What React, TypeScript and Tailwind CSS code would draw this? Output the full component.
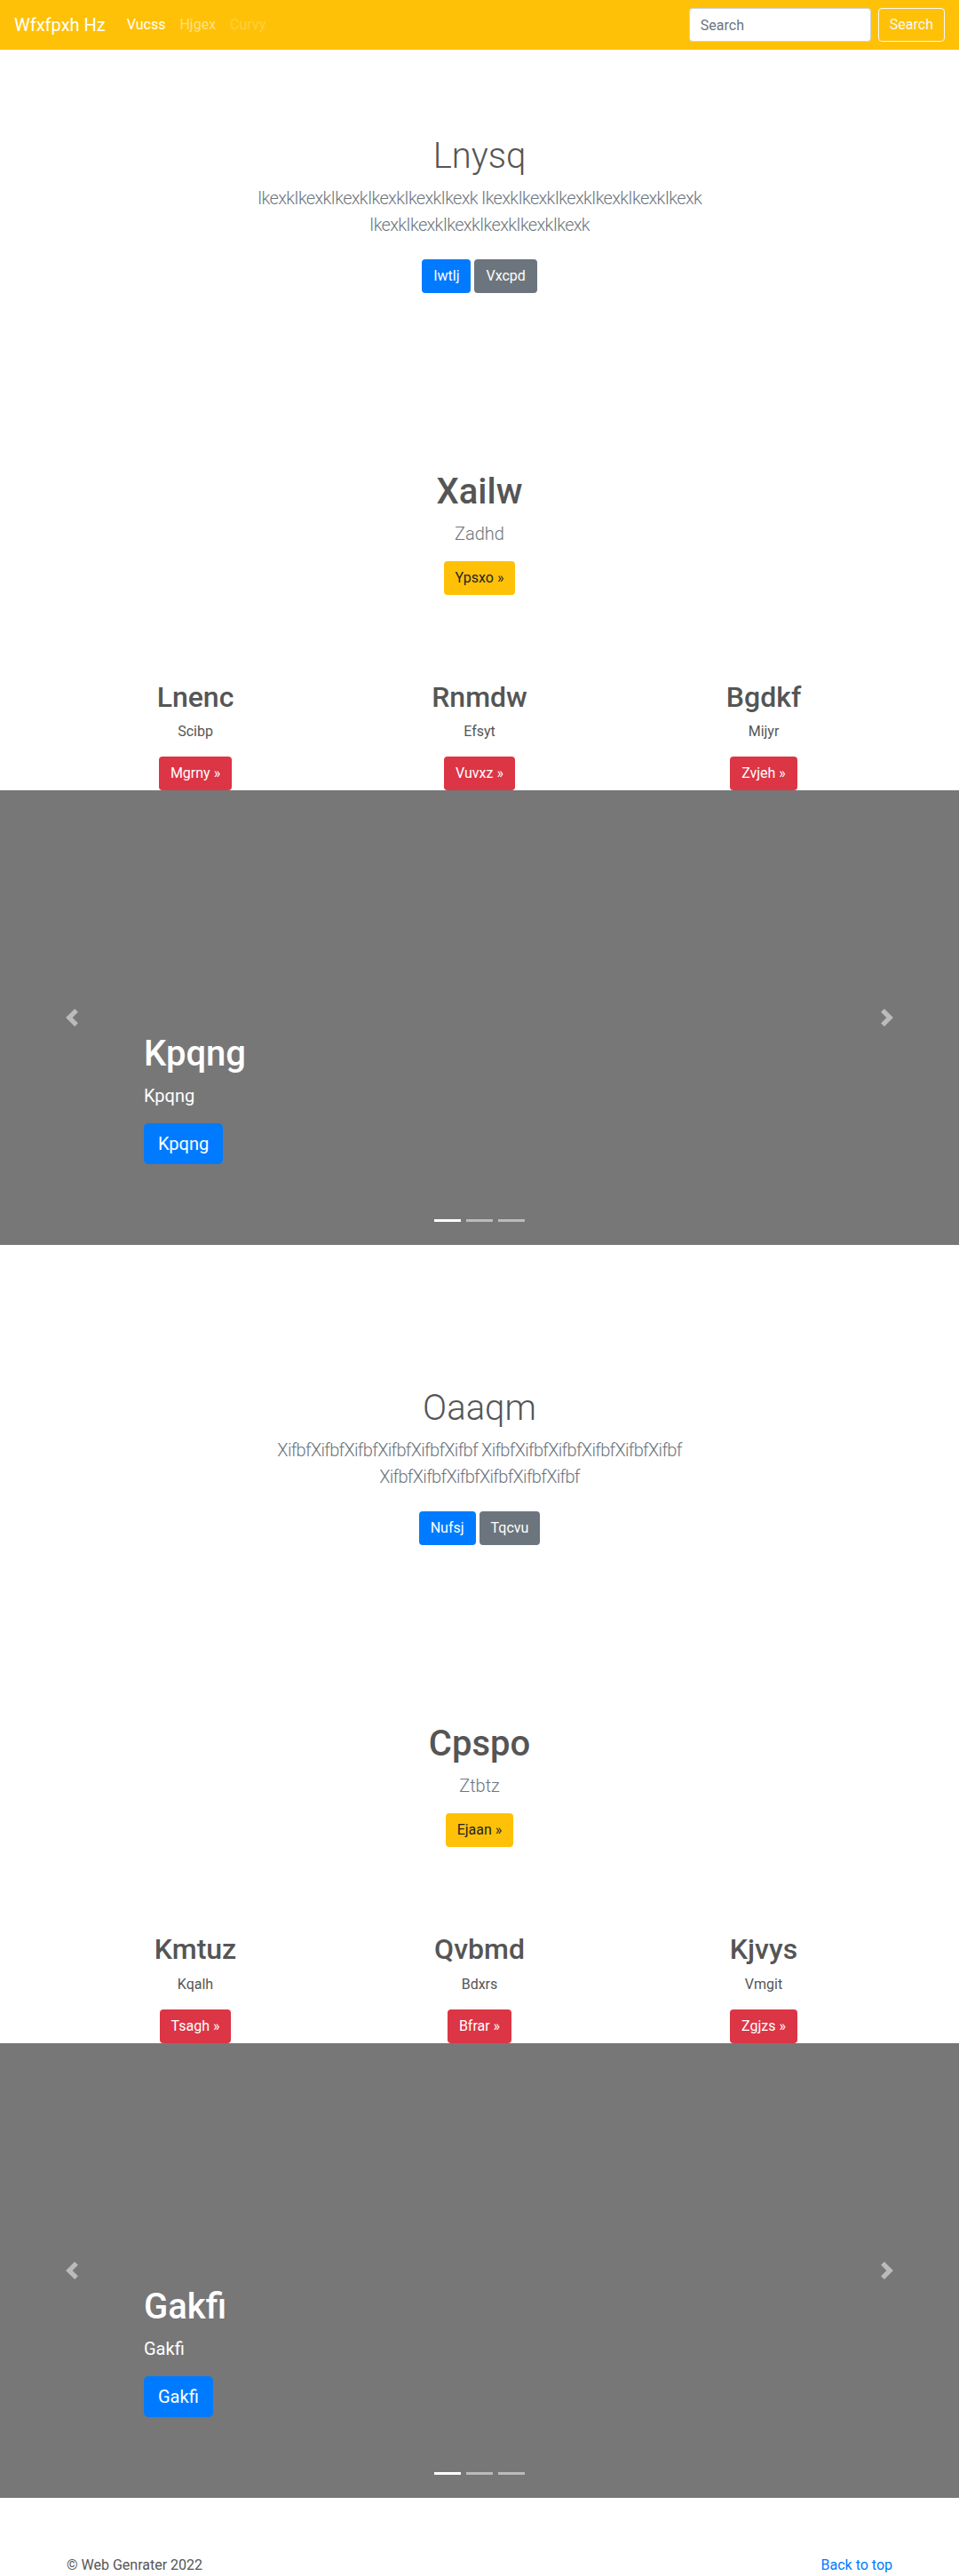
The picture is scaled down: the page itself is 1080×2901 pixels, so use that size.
import React from 'react';

const btn = 'inline-block rounded border border-transparent px-3 py-1.5 text-base leading-6';

function ChevronLeft() {
    return (
        <svg width="20" height="20" viewBox="0 0 8 8" fill="#fff">
            <path d="M5.25 0l-4 4 4 4 1.5-1.5-2.5-2.5 2.5-2.5-1.5-1.5z" />
        </svg>
    );
}

function ChevronRight() {
    return (
        <svg width="20" height="20" viewBox="0 0 8 8" fill="#fff">
            <path d="M2.75 0l-1.5 1.5 2.5 2.5-2.5 2.5 1.5 1.5 4-4-4-4z" />
        </svg>
    );
}

function Navbar() {
    return (
        <nav className="flex h-14 items-center bg-[#ffc107] px-4">
            <a href="#" className="mr-4 py-[5px] text-xl leading-[30px] text-white">Wfxfpxh Hz</a>
            <ul className="flex">
                <li><a href="#" className="block p-2 text-white">Vucss</a></li>
                <li><a href="#" className="block p-2 text-white/50">Hjgex</a></li>
                <li><span className="block p-2 text-white/25">Curvy</span></li>
            </ul>
            <form className="ml-auto flex items-center">
                <input
                    type="text"
                    placeholder="Search"
                    className="h-[38px] w-[205px] rounded border border-[#ced4da] bg-white px-3 text-base text-[#495057] outline-none placeholder:text-[#6c757d]"
                />
                <button type="button" className="ml-2 h-[38px] rounded border border-[#f8f9fa] px-3 text-base text-[#f8f9fa]">
                    Search
                </button>
            </form>
        </nav>
    );
}

// album style hero: light heading, muted lead, two buttons
function Hero({ title, lead, primary, secondary }: { title: string; lead: string; primary: string; secondary: string }) {
    return (
        <section className="py-24 text-center">
            <div className="mx-auto max-w-[640px] px-[15px]">
                <h1 className="mb-2 text-[40px] leading-[1.2] font-light text-[#555]">{title}</h1>
                <p className="mb-4 text-xl leading-[1.5] font-light tracking-[-0.7px] text-[#6c757d]">{lead}</p>
                <p className="flex justify-center gap-1">
                    <a href="#" className={`${btn} my-2 bg-[#007bff] text-white`}>{primary}</a>
                    <a href="#" className={`${btn} my-2 bg-[#6c757d] text-white`}>{secondary}</a>
                </p>
            </div>
        </section>
    );
}

interface Column {
    title: string;
    text: string;
    action: string;
}

function Marketing({ title, lead, action, columns }: { title: string; lead: string; action: string; columns: Column[] }) {
    return (
        <>
            <section className="pt-24 text-center">
                <div className="mx-auto max-w-[640px] px-[15px]">
                    <h1 className="mb-2 text-[40px] leading-[1.2] font-medium text-[#555]">{title}</h1>
                    <p className="mb-4 text-xl leading-[1.5] font-light text-[#6c757d]">{lead}</p>
                    <p>
                        <a href="#" className={`${btn} bg-[#ffc107] text-[#212529]`}>{action}</a>
                    </p>
                </div>
            </section>
            <div className="mx-auto grid max-w-[960px] grid-cols-3 pt-24 text-center">
                {columns.map(col => (
                    <div key={col.title} className="px-[15px]">
                        <h2 className="mb-2 text-[32px] leading-[1.2] font-medium text-[#555]">{col.title}</h2>
                        <p className="mb-4 text-base leading-6 text-[#555]">{col.text}</p>
                        <p>
                            <a href="#" className={`${btn} bg-[#dc3545] text-white`}>{col.action}</a>
                        </p>
                    </div>
                ))}
            </div>
        </>
    );
}

function Carousel({ caption }: { caption: string }) {
    return (
        <div className="relative mb-16 h-[512px] overflow-hidden bg-[#777]">
            {/* caption */}
            <div className="absolute right-[15%] bottom-[55px] left-[15%] py-5 text-left text-white">
                <h1 className="mb-2 text-[40px] leading-[1.2] font-medium">{caption}</h1>
                <p className="mb-4 text-xl leading-[1.5]">{caption}</p>
                <p className="mb-4 flex">
                    <a href="#" className="rounded-[5px] bg-[#007bff] px-4 py-2 text-xl leading-[1.5] text-white">{caption}</a>
                </p>
            </div>

            {/* indicators */}
            <ol className="absolute right-0 bottom-[26px] left-0 flex justify-center">
                <li className="mx-[3px] h-[3px] w-[30px] bg-white" />
                <li className="mx-[3px] h-[3px] w-[30px] bg-white/50" />
                <li className="mx-[3px] h-[3px] w-[30px] bg-white/50" />
            </ol>

            {/* controls */}
            <a href="#" className="absolute top-0 bottom-0 left-0 flex w-[15%] items-center justify-center opacity-50">
                <ChevronLeft />
            </a>
            <a href="#" className="absolute top-0 right-0 bottom-0 flex w-[15%] items-center justify-center opacity-50">
                <ChevronRight />
            </a>
        </div>
    );
}

const ikexk = 'IkexkIkexkIkexkIkexkIkexkIkexk';
const xifbf = 'XifbfXifbfXifbfXifbfXifbfXifbf';

export default function App() {
    return (
        <div className="min-h-screen bg-white font-[Roboto,'Liberation_Sans',sans-serif] text-[#212529]">
            <Navbar />

            <Hero title="Lnysq" lead={`${ikexk} ${ikexk} ${ikexk}`} primary="Iwtlj" secondary="Vxcpd" />
            <Marketing
                title="Xailw"
                lead="Zadhd"
                action="Ypsxo »"
                columns={[
                    { title: 'Lnenc', text: 'Scibp', action: 'Mgrny »' },
                    { title: 'Rnmdw', text: 'Efsyt', action: 'Vuvxz »' },
                    { title: 'Bgdkf', text: 'Mijyr', action: 'Zvjeh »' },
                ]}
            />
            <Carousel caption="Kpqng" />

            <Hero title="Oaaqm" lead={`${xifbf} ${xifbf} ${xifbf}`} primary="Nufsj" secondary="Tqcvu" />
            <Marketing
                title="Cpspo"
                lead="Ztbtz"
                action="Ejaan »"
                columns={[
                    { title: 'Kmtuz', text: 'Kqalh', action: 'Tsagh »' },
                    { title: 'Qvbmd', text: 'Bdxrs', action: 'Bfrar »' },
                    { title: 'Kjvys', text: 'Vmgit', action: 'Zgjzs »' },
                ]}
            />
            <Carousel caption="Gakfi" />

            <footer className="mx-auto flex max-w-[960px] justify-between px-[15px]">
                <p className="mb-4 text-base leading-6 text-[#555]">© Web Genrater 2022</p>
                <p className="mb-4 text-base leading-6">
                    <a href="#" className="text-[#007bff]">Back to top</a>
                </p>
            </footer>
        </div>
    );
}
